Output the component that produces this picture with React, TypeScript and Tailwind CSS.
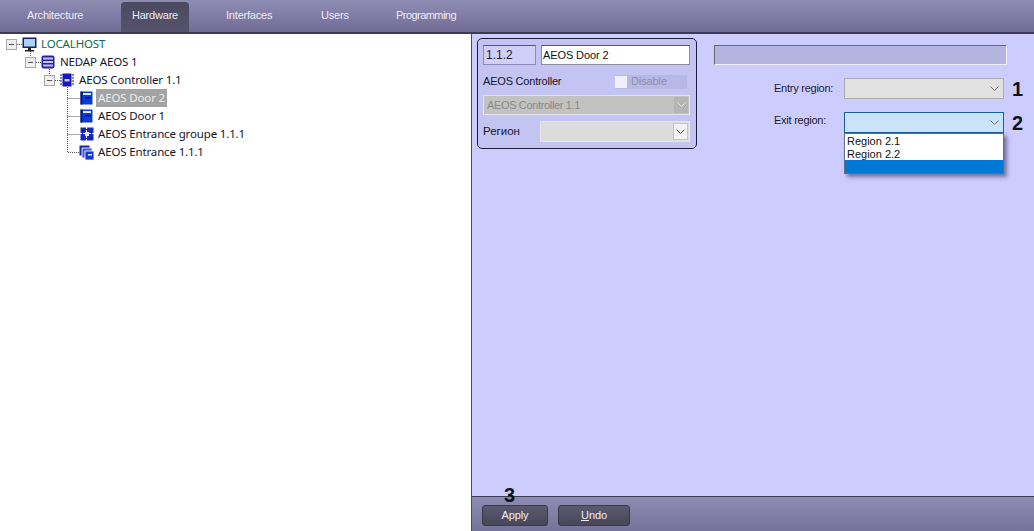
import React from "react";

const sans = "font-['Liberation_Sans',Arial,sans-serif]";
const tahoma = "font-['Noto_Sans',sans-serif]";

const Chevron = ({ color = "#6b6b6b" }: { color?: string }) => (
  <svg width="9" height="6" viewBox="0 0 9 6" fill="none">
    <path d="M0.5 0.5 L4.5 4.5 L8.5 0.5" stroke={color} strokeWidth="1" />
  </svg>
);

const ComputerIcon = () => (
  <svg width="15" height="15" viewBox="0 0 15 15">
    <rect x="0.5" y="0.5" width="14" height="10.5" fill="#1c1c70" />
    <rect x="2" y="2" width="11" height="7.5" fill="#a8d4f0" />
    <rect x="6" y="11" width="3" height="2" fill="#222" />
    <rect x="3" y="13" width="9" height="1.5" fill="#222" />
  </svg>
);

const ServerIcon = () => (
  <svg width="14" height="14" viewBox="0 0 14 14">
    <rect x="0.5" y="0.5" width="13" height="13" rx="2" fill="#2222a8" />
    <rect x="2" y="2.5" width="10" height="2" fill="#c4c4f0" />
    <rect x="2" y="6" width="10" height="2" fill="#c4c4f0" />
    <rect x="2" y="9.5" width="10" height="2" fill="#c4c4f0" />
  </svg>
);

const ChipIcon = () => (
  <svg width="14" height="14" viewBox="0 0 14 14">
    <rect x="2.5" y="0.5" width="9" height="13" fill="#1414c0" />
    <path d="M0 2h2M0 5h2M0 8h2M0 11h2M12 2h2M12 5h2M12 8h2M12 11h2" stroke="#101060" strokeWidth="1.2" />
    <rect x="4.5" y="6" width="5" height="2.5" fill="#c8c8f0" />
  </svg>
);

const DoorIcon = () => (
  <svg width="13" height="14" viewBox="0 0 13 14">
    <rect x="0.5" y="0.5" width="12" height="13" fill="#0a3cd8" />
    <rect x="3" y="2" width="8" height="2" fill="#e0e8ff" />
    <rect x="5" y="6" width="6" height="1.5" fill="#0a1a70" />
    <rect x="0.5" y="0.5" width="2" height="13" fill="#0a1a70" />
  </svg>
);

const GroupIcon = () => (
  <svg width="14" height="14" viewBox="0 0 14 14">
    <rect x="0.5" y="0.5" width="13" height="13" fill="#1428c8" />
    <path d="M6.5 0v14M0 6.5h14" stroke="#ffffff" strokeWidth="1" strokeDasharray="2 1" />
    <rect x="5" y="5" width="4" height="4" fill="#e8e8ff" />
    <rect x="2" y="2" width="2" height="2" fill="#0a1a70" />
    <rect x="10" y="10" width="2" height="2" fill="#0a1a70" />
  </svg>
);

const EntranceIcon = () => (
  <svg width="15" height="15" viewBox="0 0 15 15">
    <rect x="0.5" y="0.5" width="10" height="10" fill="#14289c" />
    <rect x="3" y="3" width="10" height="10" fill="#3a5ad8" stroke="#ffffff" strokeWidth="0.8" />
    <rect x="6" y="6" width="9" height="9" fill="#1438c8" stroke="#ffffff" strokeWidth="0.8" />
    <rect x="9" y="9" width="4" height="1.5" fill="#e0e8ff" />
  </svg>
);

const Expander = () => (
  <span className="flex w-[11px] h-[11px] items-center justify-center border border-[#a8a8a8] bg-[#f0f0f0] shrink-0">
    <span className="w-[5px] h-px bg-[#555]" />
  </span>
);

type Row = {
  label: string;
  icon: React.ReactNode;
  indent: string;
  gap: string;
  expander?: boolean;
  selected?: boolean;
  green?: boolean;
};

const rows: Row[] = [
  { label: "LOCALHOST", icon: <ComputerIcon />, indent: "pl-[6px]", gap: "ml-[2px]", expander: true, green: true },
  { label: "NEDAP AEOS 1", icon: <ServerIcon />, indent: "pl-[25px]", gap: "ml-[3px]", expander: true },
  { label: "AEOS Controller 1.1", icon: <ChipIcon />, indent: "pl-[44px]", gap: "ml-[3px]", expander: true },
  { label: "AEOS Door 2", icon: <DoorIcon />, indent: "pl-[80px]", gap: "ml-[3px]", selected: true },
  { label: "AEOS Door 1", icon: <DoorIcon />, indent: "pl-[80px]", gap: "ml-[3px]" },
  { label: "AEOS Entrance groupe 1.1.1", icon: <GroupIcon />, indent: "pl-[80px]", gap: "ml-[2px]" },
  { label: "AEOS Entrance 1.1.1", icon: <EntranceIcon />, indent: "pl-[79px]", gap: "ml-[2px]" },
];

const Tree = () => (
  <div className="relative w-[471px] bg-white pt-px shrink-0 overflow-hidden">
    <svg className="absolute left-0 top-0" width="90" height="130" fill="none" stroke="#555" strokeDasharray="1 1">
      <path d="M17 10.5H22M30.5 17V24M36 28.5H42M49.5 35V42M55 46.5H61M67.5 53V118.5H80M67.5 64.5H80M67.5 82.5H80M67.5 100.5H80" />
    </svg>
    {rows.map((r) => (
      <div key={r.label} className={`relative flex h-[18px] items-center ${r.indent}`}>
        {r.expander && (
          <span className="mr-[5px]">
            <Expander />
          </span>
        )}
        <span className="shrink-0">{r.icon}</span>
        <span
          className={`${tahoma} ${r.gap} px-[2px] h-[18px] leading-[18px] text-[11.5px] tracking-[-0.15px] whitespace-nowrap ${
            r.selected ? "bg-[#a3a3a3] text-[#ececec]" : r.green ? "text-[#0f6b4a]" : "text-[#14142c]"
          }`}
        >
          {r.label}
        </span>
      </div>
    ))}
  </div>
);

const tabText = `${sans} text-[11px] tracking-[-0.2px] text-[#ecebf5]`;

const TopBar = () => (
  <div className="flex h-[34px] shrink-0 items-end border-b-2 border-[#3c3a55] bg-gradient-to-b from-[#908db4] to-[#706c96]">
    <div className={`${tabText} w-[121px] h-[30px] pl-[27px] leading-[27px]`}>Architecture</div>
    <div className={`${tabText} w-[68px] h-[30px] text-center leading-[27px] rounded-t-[4px] bg-gradient-to-b from-[#4a4960] to-[#55546c]`}>
      Hardware
    </div>
    <div className={`${tabText} w-[132px] h-[30px] pl-[37px] leading-[27px]`}>Interfaces</div>
    <div className={`${tabText} w-[75px] h-[30px] leading-[27px]`}>Users</div>
    <div className={`${tabText} h-[30px] leading-[27px] tracking-[-0.55px]`}>Programming</div>
  </div>
);

const DoorForm = () => (
  <div className="w-[220px] h-[111px] shrink-0 rounded-[5px] border border-[#1e1e3c] bg-[#c4c4f2] px-[5px] pt-[6px]">
    <div className="flex gap-[5px]">
      <div className={`${sans} w-[53px] h-[20px] border border-[#8c8cbc] border-t-[#55557a] bg-[#cfcffa] pl-[2px] text-[12px] leading-[18px] text-[#222]`}>
        1.1.2
      </div>
      <div className={`${sans} w-[149px] h-[20px] border border-[#8c8c9c] border-t-[#55557a] bg-white pl-[1px] text-[11px] tracking-[-0.1px] leading-[18px] text-[#111]`}>
        AEOS Door 2
      </div>
    </div>
    <div className="flex mt-[9px] h-[15px] items-center">
      <span className={`${sans} text-[11px] tracking-[-0.2px] text-[#14142c] w-[132px]`}>AEOS Controller</span>
      <div className="flex h-[14px] w-[72px] items-center bg-[#b8b8e6]">
        <span className="w-[12px] h-[12px] bg-[#f0f0fa]" />
        <span className={`${sans} ml-[4px] text-[11px] tracking-[-0.1px] text-[#8f8fa8]`}>Disable</span>
      </div>
    </div>
    <div className="flex mt-[6px] h-[20px] w-[207px] items-center justify-between border border-[#e4e4ee] bg-[#c2c2c2] pl-[3px] pr-px">
      <span className={`${sans} text-[11px] tracking-[-0.35px] text-[#8a8a8a]`}>AEOS Controller 1.1</span>
      <span className="flex h-[16px] w-[14px] items-center justify-center bg-[#b5b5b5]">
        <Chevron color="#e6e6e6" />
      </span>
    </div>
    <div className="flex mt-[6px] h-[21px] items-center">
      <span className={`${sans} w-[57px] text-[11.5px] text-[#14142c]`}>Регион</span>
      <div className="flex h-[21px] w-[150px] items-center justify-end border border-[#e4e4ee] bg-[#dcdcdc] pr-px">
        <span className="flex h-[17px] w-[15px] items-center justify-center bg-[#f2f2f2] border border-[#c4c4c4]">
          <Chevron color="#444" />
        </span>
      </div>
    </div>
  </div>
);

const Note = ({ children }: { children: React.ReactNode }) => (
  <span className={`${sans} text-[20px] font-bold leading-none text-[#111] ml-[8px]`}>{children}</span>
);

const RegionPanel = () => (
  <div className="ml-[17px] flex w-[320px] flex-col pt-[7px]">
    <div className="h-[20px] w-[293px] border border-[#eeeeff] border-l-[#6a6a6a] border-t-[#6a6a6a] bg-[#b4b4e0]" />
    <div className="mt-[13px] flex h-[21px] items-center">
      <span className={`${sans} w-[130px] pl-[60px] text-[11px] tracking-[-0.25px] text-[#1b1b30]`}>Entry region:</span>
      <div className="flex h-[21px] w-[160px] items-center justify-end border border-[#adadad] bg-[#e1e1e1] pr-[4px]">
        <Chevron />
      </div>
      <Note>1</Note>
    </div>
    <div className="relative mt-[13px] flex h-[21px] items-center">
      <span className={`${sans} w-[130px] pl-[60px] -mt-[4px] text-[11px] tracking-[-0.25px] text-[#1b1b30]`}>Exit region:</span>
      <div className="flex h-[21px] w-[160px] items-center justify-end border border-[#1c5f96] bg-[#c9e3f8] pr-[4px]">
        <Chevron />
      </div>
      <Note>2</Note>
      <div className="absolute left-[130px] top-[21px] w-[160px] h-[41px] border border-[#5f6f80] bg-white shadow-[3px_3px_4px_rgba(40,40,80,0.55)]">
        <div className={`${sans} h-[13px] pl-[2px] text-[11px] leading-[14px] text-[#111]`}>Region 2.1</div>
        <div className={`${sans} h-[13px] pl-[2px] text-[11px] leading-[14px] text-[#111]`}>Region 2.2</div>
        <div className="h-[13px] bg-[#0078d7]" />
      </div>
    </div>
  </div>
);

const BarButton = ({ width, children }: { width: string; children: React.ReactNode }) => (
  <div
    className={`${sans} ${width} flex h-[21px] items-center justify-center rounded-[3px] border border-[#3a3a4c] bg-gradient-to-b from-[#5a596e] to-[#48475a] text-[11px] tracking-[-0.1px] text-[#ededf5]`}
  >
    {children}
  </div>
);

export default function App() {
  return (
    <div className="flex h-[531px] w-[1034px] flex-col overflow-hidden bg-white">
      <TopBar />
      <div className="flex min-h-0 flex-1">
        <Tree />
        <div className="flex min-w-0 flex-1 flex-col border-l border-[#4a4a5e]">
          <div className="flex flex-1 bg-[#ccccff] pl-[5px] pt-[4px]">
            <DoorForm />
            <RegionPanel />
          </div>
          <div className="relative flex h-[35px] gap-[10px] border-t border-[#3c3a55] bg-gradient-to-b from-[#8f8cb3] to-[#76739b] pl-[10px] pt-[8px]">
            <BarButton width="w-[66px]">Apply</BarButton>
            <BarButton width="w-[72px]">
              <span>
                <span className="underline">U</span>ndo
              </span>
            </BarButton>
            <span className={`${sans} absolute left-[32px] -top-[12px] text-[20px] font-bold leading-none text-[#111]`}>3</span>
          </div>
        </div>
      </div>
    </div>
  );
}
